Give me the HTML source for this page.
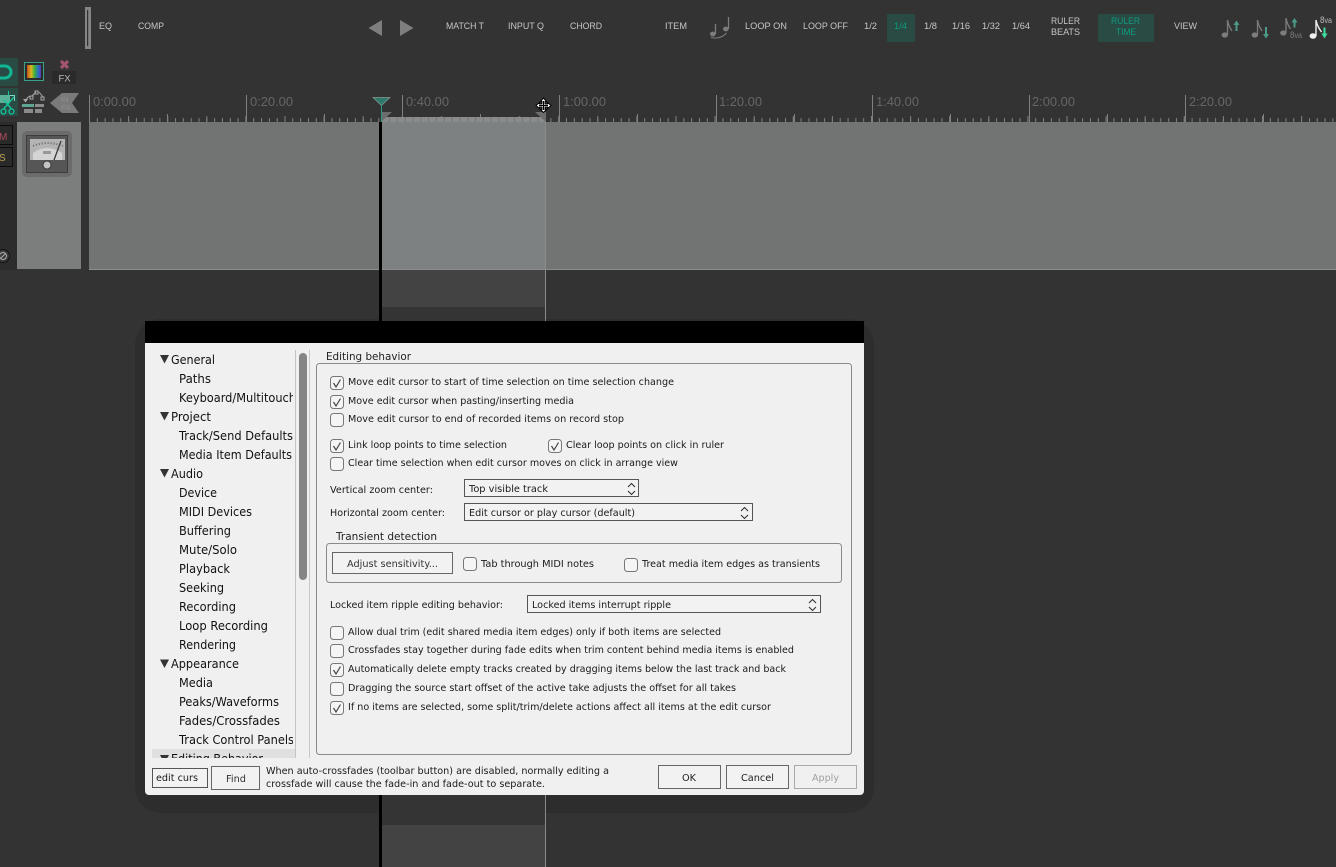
<!DOCTYPE html>
<html><head><meta charset="utf-8"><title>Preferences</title>
<style>
html,body{margin:0;padding:0;background:#333;width:1336px;height:867px;overflow:hidden}
svg{display:block}
text{white-space:pre}
.t{font:9px "Liberation Sans",sans-serif;fill:#c6c6c6}
.r{font:13px "Liberation Sans",sans-serif;fill:#666}
.d{font:10px "DejaVu Sans","Liberation Sans",sans-serif;fill:#1a1a1a}
.n{font:12px "DejaVu Sans","Liberation Sans",sans-serif;fill:#111}
.h{font:11px "DejaVu Sans","Liberation Sans",sans-serif;fill:#222}
.cb{fill:#f5f5f5;stroke:#777;stroke-width:1}
.ck{fill:none;stroke:#444;stroke-width:1.2}
.sel{fill:#f2f2f2;stroke:#555;stroke-width:1}
.btn{fill:#f2f2f2;stroke:#666;stroke-width:1}
.chev{fill:none;stroke:#333;stroke-width:1.1}
.ng{fill:#7c7c7c}
.ns{fill:none;stroke:#7c7c7c;stroke-width:1.3}
.ar{fill:#4d9a88}
</style></head><body>
<svg width="1336" height="867" viewBox="0 0 1336 867" xmlns="http://www.w3.org/2000/svg">
<defs>
<clipPath id="tree"><rect x="145" y="349" width="148" height="409"/></clipPath>
<linearGradient id="rb" x1="0" x2="1" y1="0" y2="0"><stop offset="0" stop-color="#c8501e"/><stop offset=".3" stop-color="#d8b81e"/><stop offset=".55" stop-color="#3cae3c"/><stop offset=".8" stop-color="#2a70c8"/><stop offset="1" stop-color="#5a3ab0"/></linearGradient>
</defs>
<rect width="1336" height="867" fill="#333"/>

<!-- toolbar -->
<rect x="85" y="7" width="6" height="42" fill="#858585"/><rect x="87" y="10" width="1.2" height="36" fill="#333"/>
<text class="t" x="99" y="29" textLength="13" lengthAdjust="spacingAndGlyphs">EQ</text>
<text class="t" x="138" y="29" textLength="26" lengthAdjust="spacingAndGlyphs">COMP</text>
<path d="M382 20V36L368.500 28Z" fill="#7e7e7e"/><path d="M400 20V36L413.500 28Z" fill="#7e7e7e"/>
<text class="t" x="446" y="29" textLength="38" lengthAdjust="spacingAndGlyphs">MATCH T</text>
<text class="t" x="508" y="29" textLength="36" lengthAdjust="spacingAndGlyphs">INPUT Q</text>
<text class="t" x="570" y="29" textLength="32" lengthAdjust="spacingAndGlyphs">CHORD</text>
<text class="t" x="665" y="29" textLength="22" lengthAdjust="spacingAndGlyphs">ITEM</text>
<g>
<ellipse cx="712.800" cy="34" rx="2.800" ry="2.400" class="ng"/><path d="M715.500 34V24" class="ns"/>
<ellipse cx="725.800" cy="29" rx="2.800" ry="2.400" class="ng"/><path d="M728.500 29V17" class="ns"/>
<path d="M711 37.500Q721 39.500 726.500 33" class="ns" style="stroke-width:1"/>
</g>
<text class="t" x="745" y="29" textLength="42" lengthAdjust="spacingAndGlyphs">LOOP ON</text>
<text class="t" x="803" y="29" textLength="45" lengthAdjust="spacingAndGlyphs">LOOP OFF</text>
<text class="t" x="864" y="29" textLength="13" lengthAdjust="spacingAndGlyphs">1/2</text>
<rect x="887" y="14" width="28" height="28" fill="#2a4a44"/>
<text class="t" x="894" y="29" textLength="13" lengthAdjust="spacingAndGlyphs" style="fill:#0d9c80">1/4</text>
<text class="t" x="924" y="29" textLength="13" lengthAdjust="spacingAndGlyphs">1/8</text>
<text class="t" x="952" y="29" textLength="18" lengthAdjust="spacingAndGlyphs">1/16</text>
<text class="t" x="982" y="29" textLength="18" lengthAdjust="spacingAndGlyphs">1/32</text>
<text class="t" x="1012" y="29" textLength="18" lengthAdjust="spacingAndGlyphs">1/64</text>
<text class="t" x="1051" y="24" textLength="29" lengthAdjust="spacingAndGlyphs">RULER</text>
<text class="t" x="1051" y="35" textLength="29" lengthAdjust="spacingAndGlyphs">BEATS</text>
<rect x="1098" y="14" width="56" height="28" fill="#2a4a44"/>
<text class="t" x="1111" y="24" textLength="29" lengthAdjust="spacingAndGlyphs" style="fill:#0d9c80">RULER</text>
<text class="t" x="1116" y="35" textLength="20" lengthAdjust="spacingAndGlyphs" style="fill:#0d9c80">TIME</text>
<text class="t" x="1174" y="29" textLength="23" lengthAdjust="spacingAndGlyphs">VIEW</text>

<!-- note icons -->
<g>
<ellipse cx="1224.800" cy="35" rx="3.200" ry="2.600" class="ng"/><path d="M1227.500 35V20Q1228.500 26 1232 31" class="ns"/>
<path d="M1236.500 20.500l-3 4.500h2v6h2v-6h2z" class="ar"/>
<ellipse cx="1254.800" cy="35" rx="3.200" ry="2.600" class="ng"/><path d="M1257.500 35V20Q1258.500 26 1262 31" class="ns"/>
<path d="M1266 38.500l-3-4.500h2v-7h2v7h2z" class="ar"/>
<ellipse cx="1283.300" cy="33" rx="3.200" ry="2.600" class="ng"/><path d="M1286 33V18Q1287 24 1290.500 29" class="ns"/>
<path d="M1294.500 18l-3 4.500h2v5h2v-5h2z" class="ar"/>
<text x="1290" y="38" style="font:8px 'Liberation Sans',sans-serif;fill:#7c7c7c" textLength="12" lengthAdjust="spacingAndGlyphs"><tspan style="font-size:9px">8</tspan>va</text>
<ellipse cx="1313" cy="36" rx="3.400" ry="2.800" fill="#f0f0f0"/><path d="M1316 36V20Q1317 26 1321.500 32" fill="none" stroke="#f0f0f0" stroke-width="1.400"/>
<path d="M1324.500 38.500l-3-5h2v-6h2v6h2z" fill="#3fdca0"/>
<text x="1320" y="23" style="font:8px 'Liberation Sans',sans-serif;fill:#bbb" textLength="12" lengthAdjust="spacingAndGlyphs"><tspan style="font-size:9px">8</tspan>va</text>
</g>

<!-- left top icons -->
<rect x="0" y="58" width="18" height="28" fill="#2a4a44"/>
<path d="M0 66H5a6 6 0 0 1 0 12H0" fill="none" stroke="#0fb892" stroke-width="3"/>
<rect x="24.500" y="62.500" width="19" height="18" fill="#2b2b2b" stroke="#39a08a"/>
<rect x="27" y="65" width="14" height="13" fill="url(#rb)"/>
<path d="M61 61L68 68M68 61L61 68" stroke="#a1546e" stroke-width="3.200" fill="none"/>
<rect x="52" y="71" width="24" height="13" fill="#2a2a2a"/>
<text x="58.500" y="81.500" style="font:9.500px 'Liberation Sans',sans-serif;fill:#b8b8b8">FX</text>

<rect x="0" y="88" width="18" height="28" fill="#2a4a44"/>
<rect x="0" y="95" width="10" height="8" fill="#5bb09a"/>
<path d="M10 95.500H14.500V101" fill="none" stroke="#7fd8c4" stroke-width="1"/>
<path d="M14 97L3.500 109M4 100L11.500 109" fill="none" stroke="#15c49b" stroke-width="1.400"/>
<circle cx="3.500" cy="111.500" r="2.500" fill="none" stroke="#15c49b" stroke-width="1.300"/><circle cx="11.500" cy="111.500" r="2.500" fill="none" stroke="#15c49b" stroke-width="1.300"/>
<path d="M8.500 91V95" stroke="#15c49b" stroke-width="1"/>
<g fill="none" stroke="#a8a8a8" stroke-width="1">
<path d="M26 101Q27 96 32 96L36 92M39 92L43 97"/><rect x="30" y="96" width="3" height="3"/><rect x="35" y="91" width="3" height="3"/><rect x="41" y="97" width="3" height="3"/>
</g>
<path d="M23 99h5l-2.500 3.500z" fill="#a8a8a8"/>
<rect x="22" y="104" width="12" height="3" fill="#5ea592"/><rect x="35" y="104" width="9" height="3" fill="#8b8b8b"/>
<rect x="24" y="109" width="9" height="4" fill="#8b8b8b"/><rect x="35" y="109" width="7" height="4" fill="#8b8b8b"/>
<path d="M50 103L62 93H79L72 103L79 113H62Z" fill="#7a7a7a"/>
<text x="61" y="102" style="font:7.500px 'Liberation Sans',sans-serif;fill:#8e8e8e">IN</text>
<text x="61" y="110" style="font:7.500px 'Liberation Sans',sans-serif;fill:#8e8e8e">FX</text>

<!-- ruler -->
<g class="r">
<text class="r" x="93" y="106" textLength="43" lengthAdjust="spacingAndGlyphs">0:00.00</text>
<text class="r" x="250" y="106" textLength="43" lengthAdjust="spacingAndGlyphs">0:20.00</text>
<text class="r" x="406" y="106" textLength="43" lengthAdjust="spacingAndGlyphs">0:40.00</text>
<text class="r" x="563" y="106" textLength="43" lengthAdjust="spacingAndGlyphs">1:00.00</text>
<text class="r" x="719" y="106" textLength="43" lengthAdjust="spacingAndGlyphs">1:20.00</text>
<text class="r" x="876" y="106" textLength="43" lengthAdjust="spacingAndGlyphs">1:40.00</text>
<text class="r" x="1032" y="106" textLength="43" lengthAdjust="spacingAndGlyphs">2:00.00</text>
<text class="r" x="1189" y="106" textLength="43" lengthAdjust="spacingAndGlyphs">2:20.00</text>
</g>
<g stroke="#808080" stroke-width="1">
<path d="M89.500 95V122M246.500 95V122M402.500 95V122M559.500 95V122M716.500 95V122M872.500 95V122M1029.500 95V122M1185.500 95V122"/>
<path d="M167.500 114V122M324.500 114V122M480.500 114V122M637.500 114V122M794.500 114V122M950.500 114V122M1107.500 114V122M1263.500 114V122"/>
</g>
<line x1="89" y1="120" x2="1336" y2="120" stroke="#808080" stroke-width="4" stroke-dasharray="1 6.820"/>
<line x1="89" y1="119" x2="1336" y2="119" stroke="#808080" stroke-width="6" stroke-dasharray="1 38.100"/>
<rect x="382" y="117" width="164" height="5" fill="#8a8c8c"/>
<line x1="389" y1="119.500" x2="546" y2="119.500" stroke="#767878" stroke-width="5" stroke-dasharray="1 6.820"/>
<path d="M381 122V112H392Z" fill="#6c6c6c"/><path d="M546 122V112H535Z" fill="#6c6c6c"/>

<!-- track -->
<rect x="0" y="122" width="17" height="148" fill="#2c2c2c"/>
<rect x="17" y="122" width="64" height="147" fill="#7c7e7d"/>
<rect x="89" y="122" width="1247" height="147" fill="#727473"/>
<rect x="381" y="122" width="165" height="147" fill="#7e8181"/>
<rect x="89" y="269" width="1247" height="1" fill="#8c8e8d"/>
<rect x="381" y="270" width="165" height="37" fill="#434343"/>

<!-- track panel -->
<rect x="-2" y="125.500" width="14.500" height="19" fill="#2a2a2a" stroke="#0c0c0c"/>
<text x="-1" y="140" style="font:10px 'Liberation Sans',sans-serif;fill:#b04a5a">M</text>
<rect x="-2" y="147.500" width="14.500" height="19" fill="#2a2a2a" stroke="#0c0c0c"/>
<text x="-1" y="161" style="font:10px 'Liberation Sans',sans-serif;fill:#b8a350">S</text>
<circle cx="3" cy="256" r="6.500" fill="#3a3a3a" stroke="#111"/>
<circle cx="3" cy="256" r="3.500" fill="none" stroke="#aaa"/><path d="M0.500 258.500L5.500 253.500" stroke="#aaa"/>

<!-- meter -->
<rect x="22" y="131" width="50" height="46" rx="5" fill="#6b6b6b"/>
<rect x="26.500" y="135.500" width="41" height="37" fill="#565656" stroke="#3c3c3c"/>
<rect x="30" y="139" width="35" height="21" fill="#b4b4b4"/>
<path d="M33 153Q47 143 62 153V160H33Z" fill="#d4d4d4"/>
<rect x="43" y="151" width="8" height="3" fill="#999"/>
<path d="M33 146Q47 140 63 146" fill="none" stroke="#666" stroke-width="2" stroke-dasharray="1 2"/>
<path d="M54 160L61 141" stroke="#3a3a3a" stroke-width="1.300"/>
<circle cx="47" cy="165" r="4" fill="#c4c4c4" stroke="#3a3a3a"/>

<!-- markers -->
<path d="M373 97.500H390L381.500 105.500Z" fill="#2e7a6a" stroke="#8a9a96" stroke-width=".7"/>
<rect x="381" y="105" width="1" height="17" fill="#2e9a84"/>
<rect x="545" y="122" width="1" height="147" fill="#8a8c8c"/>

<!-- cursor -->
<path d="M543.500 98L546.500 101.500H545V104H547.500V102.500L551 105.500L547.500 108.500V107H545V109.500H546.500L543.500 112.500L540.500 109.500H542V107H539.500V108.500L536 105.500L539.500 102.500V104H542V101.500H540.500Z" fill="#fff" stroke="#000" stroke-width="1"/>
<path d="M543.500 101V110M539 105.500H548" stroke="#000" stroke-width="1" fill="none"/>

<!-- dialog shadow -->
<rect x="135" y="319" width="739" height="494" rx="26" fill="#2d2d2d"/>
<rect x="382" y="307" width="163" height="14" fill="#343434"/>
<rect x="379" y="122" width="3" height="199" fill="#000"/>
<rect x="545" y="270" width="1" height="51" fill="#8a8a8a"/>
<rect x="379" y="795" width="3" height="72" fill="#000"/>
<rect x="382" y="795" width="163" height="30" fill="#343434"/>
<rect x="382" y="825" width="163" height="42" fill="#434343"/>
<rect x="545" y="795" width="1" height="72" fill="#8a8a8a"/>

<!-- dialog -->
<rect x="145" y="321" width="719" height="474" rx="4" fill="#f0f0f0"/>
<rect x="145" y="321" width="719" height="22" fill="#000"/>

<!-- tree -->
<rect x="152" y="749" width="144" height="9" fill="#e0e0e0"/>
<g clip-path="url(#tree)">
<path d="M160 355H169L164.500 363.500Z" fill="#333"/>
<path d="M160 412H169L164.500 420.500Z" fill="#333"/>
<path d="M160 469H169L164.500 477.500Z" fill="#333"/>
<path d="M160 659.500H169L164.500 668Z" fill="#333"/>
<path d="M160 755H169L164.500 763Z" fill="#333"/>
<text class="n" x="171" y="364" textLength="44" lengthAdjust="spacingAndGlyphs">General</text>
<text class="n" x="179" y="383" textLength="32" lengthAdjust="spacingAndGlyphs">Paths</text>
<text class="n" x="179" y="402" textLength="117" lengthAdjust="spacingAndGlyphs">Keyboard/Multitouch</text>
<text class="n" x="171" y="421" textLength="40" lengthAdjust="spacingAndGlyphs">Project</text>
<text class="n" x="179" y="440" textLength="114" lengthAdjust="spacingAndGlyphs">Track/Send Defaults</text>
<text class="n" x="179" y="459" textLength="113" lengthAdjust="spacingAndGlyphs">Media Item Defaults</text>
<text class="n" x="171" y="478" textLength="32" lengthAdjust="spacingAndGlyphs">Audio</text>
<text class="n" x="179" y="497" textLength="38" lengthAdjust="spacingAndGlyphs">Device</text>
<text class="n" x="179" y="516" textLength="73" lengthAdjust="spacingAndGlyphs">MIDI Devices</text>
<text class="n" x="179" y="535" textLength="52" lengthAdjust="spacingAndGlyphs">Buffering</text>
<text class="n" x="179" y="554" textLength="58" lengthAdjust="spacingAndGlyphs">Mute/Solo</text>
<text class="n" x="179" y="573" textLength="51" lengthAdjust="spacingAndGlyphs">Playback</text>
<text class="n" x="179" y="592" textLength="45" lengthAdjust="spacingAndGlyphs">Seeking</text>
<text class="n" x="179" y="611" textLength="57" lengthAdjust="spacingAndGlyphs">Recording</text>
<text class="n" x="179" y="630" textLength="89" lengthAdjust="spacingAndGlyphs">Loop Recording</text>
<text class="n" x="179" y="649" textLength="57" lengthAdjust="spacingAndGlyphs">Rendering</text>
<text class="n" x="171" y="668" textLength="68" lengthAdjust="spacingAndGlyphs">Appearance</text>
<text class="n" x="179" y="687" textLength="34" lengthAdjust="spacingAndGlyphs">Media</text>
<text class="n" x="179" y="706" textLength="100" lengthAdjust="spacingAndGlyphs">Peaks/Waveforms</text>
<text class="n" x="179" y="725" textLength="101" lengthAdjust="spacingAndGlyphs">Fades/Crossfades</text>
<text class="n" x="179" y="744" textLength="115" lengthAdjust="spacingAndGlyphs">Track Control Panels</text>
<text class="n" x="171" y="763" textLength="92" lengthAdjust="spacingAndGlyphs">Editing Behavior</text>
</g>
<rect x="295" y="350" width="1" height="408" fill="#c4c4c4"/>
<rect x="309" y="350" width="1" height="408" fill="#c8c8c8"/>
<rect x="299" y="353" width="8" height="227" rx="4" fill="#858585"/>

<!-- group box -->
<rect x="316.500" y="363.500" width="535" height="391" rx="3" fill="none" stroke="#8a8a8a"/>
<text class="h" x="326" y="360" textLength="85" lengthAdjust="spacingAndGlyphs">Editing behavior</text>

<!-- checks -->
<g>
<rect class="cb" x="330.500" y="376.500" width="13" height="13" rx="3"/><path class="ck" d="M333.500 383L336 387L340.500 379.500"/>
<rect class="cb" x="330.500" y="395.500" width="13" height="13" rx="3"/><path class="ck" d="M333.500 402L336 406L340.500 398.500"/>
<rect class="cb" x="330.500" y="413.500" width="13" height="13" rx="3"/>
<rect class="cb" x="330.500" y="439.500" width="13" height="13" rx="3"/><path class="ck" d="M333.500 446L336 450L340.500 442.500"/>
<rect class="cb" x="548.500" y="439.500" width="13" height="13" rx="3"/><path class="ck" d="M551.500 446L554 450L558.500 442.500"/>
<rect class="cb" x="330.500" y="457.500" width="13" height="13" rx="3"/>
<rect class="cb" x="330.500" y="626.500" width="13" height="13" rx="3"/>
<rect class="cb" x="330.500" y="644.500" width="13" height="13" rx="3"/>
<rect class="cb" x="330.500" y="663.500" width="13" height="13" rx="3"/><path class="ck" d="M333.500 670L336 674L340.500 666.500"/>
<rect class="cb" x="330.500" y="682.500" width="13" height="13" rx="3"/>
<rect class="cb" x="330.500" y="701.500" width="13" height="13" rx="3"/><path class="ck" d="M333.500 708L336 712L340.500 704.500"/>
<rect class="cb" x="463.500" y="557.500" width="13" height="13" rx="3"/>
<rect class="cb" x="624.500" y="558.500" width="13" height="13" rx="3"/>
</g>
<text class="d" x="348" y="385" textLength="326" lengthAdjust="spacingAndGlyphs">Move edit cursor to start of time selection on time selection change</text>
<text class="d" x="348" y="404" textLength="226" lengthAdjust="spacingAndGlyphs">Move edit cursor when pasting/inserting media</text>
<text class="d" x="348" y="422" textLength="276" lengthAdjust="spacingAndGlyphs">Move edit cursor to end of recorded items on record stop</text>
<text class="d" x="348" y="448" textLength="159" lengthAdjust="spacingAndGlyphs">Link loop points to time selection</text>
<text class="d" x="566" y="448" textLength="158" lengthAdjust="spacingAndGlyphs">Clear loop points on click in ruler</text>
<text class="d" x="348" y="466" textLength="330" lengthAdjust="spacingAndGlyphs">Clear time selection when edit cursor moves on click in arrange view</text>

<text class="d" x="330" y="493" textLength="103" lengthAdjust="spacingAndGlyphs">Vertical zoom center:</text>
<rect class="sel" x="464.500" y="479.500" width="174" height="17"/>
<text class="d" x="469" y="492" textLength="79" lengthAdjust="spacingAndGlyphs">Top visible track</text>
<path class="chev" d="M628 487L631.500 483.500L635 487M628 491L631.500 494.500L635 491"/>
<text class="d" x="330" y="516" textLength="115" lengthAdjust="spacingAndGlyphs">Horizontal zoom center:</text>
<rect class="sel" x="464.500" y="503.500" width="288" height="17"/>
<text class="d" x="469" y="516" textLength="166" lengthAdjust="spacingAndGlyphs">Edit cursor or play cursor (default)</text>
<path class="chev" d="M741 511L744.500 507.500L748 511M741 515L744.500 518.500L748 515"/>

<rect x="326.500" y="543.500" width="515" height="39" rx="3" fill="none" stroke="#8a8a8a"/>
<text class="h" x="336" y="540" textLength="101" lengthAdjust="spacingAndGlyphs">Transient detection</text>
<rect class="btn" x="332.500" y="552.500" width="120" height="21"/>
<text class="d" x="347" y="567" textLength="91" lengthAdjust="spacingAndGlyphs" style="fill:#333">Adjust sensitivity...</text>
<text class="d" x="481" y="567" textLength="113" lengthAdjust="spacingAndGlyphs">Tab through MIDI notes</text>
<text class="d" x="642" y="567" textLength="178" lengthAdjust="spacingAndGlyphs">Treat media item edges as transients</text>

<text class="d" x="330" y="608" textLength="173" lengthAdjust="spacingAndGlyphs">Locked item ripple editing behavior:</text>
<rect class="sel" x="527.500" y="595.500" width="293" height="17"/>
<text class="d" x="532" y="608" textLength="139" lengthAdjust="spacingAndGlyphs">Locked items interrupt ripple</text>
<path class="chev" d="M809 603L812.500 599.500L816 603M809 607L812.500 610.500L816 607"/>

<text class="d" x="348" y="635" textLength="373" lengthAdjust="spacingAndGlyphs">Allow dual trim (edit shared media item edges) only if both items are selected</text>
<text class="d" x="348" y="653" textLength="446" lengthAdjust="spacingAndGlyphs">Crossfades stay together during fade edits when trim content behind media items is enabled</text>
<text class="d" x="348" y="672" textLength="438" lengthAdjust="spacingAndGlyphs">Automatically delete empty tracks created by dragging items below the last track and back</text>
<text class="d" x="348" y="691" textLength="388" lengthAdjust="spacingAndGlyphs">Dragging the source start offset of the active take adjusts the offset for all takes</text>
<text class="d" x="348" y="710" textLength="423" lengthAdjust="spacingAndGlyphs">If no items are selected, some split/trim/delete actions affect all items at the edit cursor</text>

<!-- footer -->
<rect class="sel" x="152.500" y="768.500" width="55" height="19"/>
<text class="d" x="156" y="781" textLength="42" lengthAdjust="spacingAndGlyphs">edit curs</text>
<rect class="btn" x="211.500" y="766.500" width="48" height="23"/>
<text class="d" x="226" y="782" textLength="20" lengthAdjust="spacingAndGlyphs" style="fill:#333">Find</text>
<text class="d" x="266" y="774" textLength="343" lengthAdjust="spacingAndGlyphs">When auto-crossfades (toolbar button) are disabled, normally editing a</text>
<text class="d" x="266" y="787" textLength="279" lengthAdjust="spacingAndGlyphs">crossfade will cause the fade-in and fade-out to separate.</text>
<rect class="btn" x="658.500" y="765.500" width="62" height="23"/>
<text class="d" x="682" y="781" textLength="14" lengthAdjust="spacingAndGlyphs" style="fill:#222">OK</text>
<rect class="btn" x="726.500" y="765.500" width="62" height="23"/>
<text class="d" x="741" y="781" textLength="33" lengthAdjust="spacingAndGlyphs" style="fill:#222">Cancel</text>
<rect x="794.500" y="765.500" width="62" height="23" fill="#f0f0f0" stroke="#aaa"/>
<text class="d" x="812" y="781" textLength="27" lengthAdjust="spacingAndGlyphs" style="fill:#a0a0a0">Apply</text>
</svg>
</body></html>
